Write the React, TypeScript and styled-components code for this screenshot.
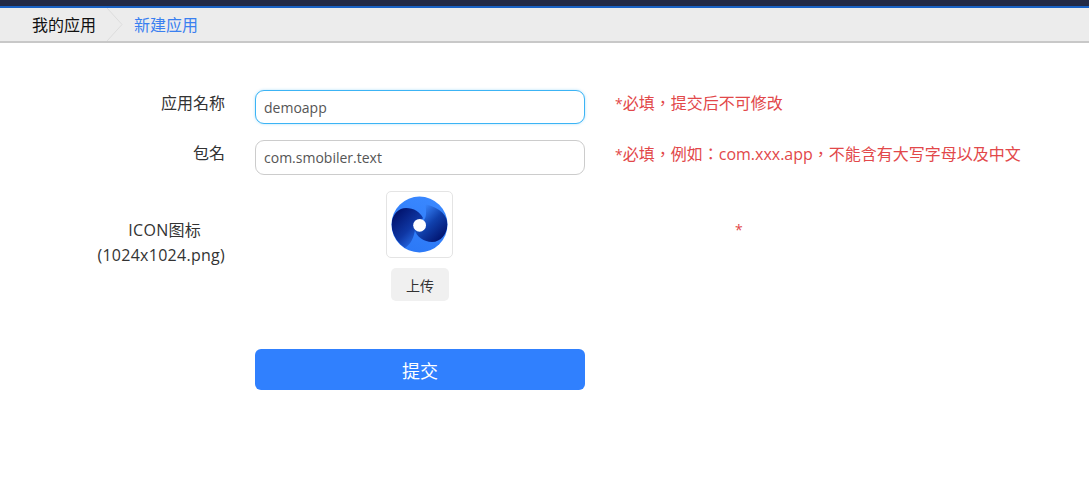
import React from "react";
import styled, { createGlobalStyle } from "styled-components";

const FONT = `"Open Sans", "Noto Sans CJK TC", sans-serif`;

const Global = createGlobalStyle`
  html, body { margin: 0; padding: 0; background: #fff; }
  body { font-family: ${FONT}; }
`;
const Page = styled.div`
  width: 1089px;
  height: 479px;
  overflow: hidden;
  background: #fff;
`;
const TopBar = styled.div`
  height: 6px;
  background: #232a45;
  border-bottom: 2px solid #1a62c4;
`;
const Crumbs = styled.nav`
  height: 33px;
  background: #ececec;
  border-bottom: 2px solid #c8c8c8;
  display: flex;
  align-items: center;
  font-size: 16px;
`;
const CrumbHome = styled.span`
  margin-left: 32px;
  margin-bottom: 2px;
  color: #111;
`;
const Chevron = styled.svg`
  width: 18px;
  height: 33px;
  margin-left: 11px;
  flex: none;
`;
const CrumbCurrent = styled.span`
  margin-left: 9px;
  margin-bottom: 2px;
  color: #3a80f0;
`;
const Form = styled.form`
  display: flex;
  flex-direction: column;
  padding-top: 47px;
`;
const Row = styled.div<{ $mb: number }>`
  display: flex;
  align-items: flex-start;
  margin-bottom: ${(p) => p.$mb}px;
`;
const Label = styled.label<{ $top?: number }>`
  width: 225px;
  flex: none;
  text-align: right;
  font-size: 16px;
  line-height: 26px;
  padding-top: ${(p) => p.$top ?? 0}px;
  color: #333;
`;
const LabelLine = styled.span<{ $shift?: number; $height?: number }>`
  display: block;
  margin-right: ${(p) => p.$shift ?? 0}px;
  line-height: ${(p) => p.$height ?? 26}px;
  letter-spacing: 0.27px;
`;
const Input = styled.input<{ $focus?: boolean }>`
  box-sizing: border-box;
  width: 330px;
  margin: 0 0 0 30px;
  padding: 0 8px;
  border-radius: 9px;
  outline: none;
  background: #fff;
  font-family: ${FONT};
  font-size: 14px;
  color: #555;
  height: ${(p) => (p.$focus ? 34 : 35)}px;
  border: 1px solid ${(p) => (p.$focus ? "#3cb4f5" : "#ccc")};
  box-shadow: ${(p) => (p.$focus ? "0 0 3px rgba(60,180,245,.4)" : "none")};
`;
const Hint = styled.span<{ $top?: number }>`
  margin-left: 30px;
  margin-top: ${(p) => p.$top ?? 0}px;
  font-size: 16px;
  line-height: 26px;
  color: #e2484a;
  white-space: nowrap;
`;
const Mark = styled.span`
  font-size: 14px;
`;
const IconColumn = styled.div`
  width: 330px;
  margin-left: 30px;
  display: flex;
  flex-direction: column;
  align-items: center;
  flex: none;
`;
const IconBox = styled.div`
  box-sizing: border-box;
  width: 67px;
  height: 67px;
  margin-right: 1px;
  border: 1px solid #e4e4e4;
  border-radius: 5px;
  display: flex;
  align-items: center;
  justify-content: center;
`;
const UploadButton = styled.button`
  margin-top: 10px;
  width: 58px;
  height: 33px;
  border: none;
  border-radius: 5px;
  background: #f0f0f0;
  color: #333;
  font-family: inherit;
  font-size: 14px;
  padding: 0;
`;
const Star = styled.span`
  margin-left: 150px;
  margin-top: 26px;
  font-size: 14px;
  line-height: 26px;
  color: #e2484a;
`;
const Submit = styled.button`
  margin-left: 255px;
  width: 330px;
  height: 41px;
  border: none;
  border-radius: 6px;
  background: #3080fe;
  color: #fff;
  font-family: inherit;
  font-size: 18px;
  padding: 0;
`;

const Logo = () => (
  <svg width="57" height="57" viewBox="0 0 57 57">
    <defs>
      <linearGradient id="base" x1="0.7" y1="0" x2="0.3" y2="1">
        <stop offset="0" stopColor="#3a88ff" />
        <stop offset="1" stopColor="#2b78f6" />
      </linearGradient>
      <linearGradient id="left" gradientUnits="userSpaceOnUse" x1="5" y1="18" x2="33" y2="46">
        <stop offset="0" stopColor="#021570" />
        <stop offset="0.5" stopColor="#0f37a4" />
        <stop offset="1" stopColor="#2e7cfa" />
      </linearGradient>
      <linearGradient id="right" gradientUnits="userSpaceOnUse" x1="53" y1="40" x2="28" y2="14">
        <stop offset="0" stopColor="#021570" />
        <stop offset="0.5" stopColor="#1040ac" />
        <stop offset="1" stopColor="#3a88ff" />
      </linearGradient>
      <clipPath id="disk">
        <circle cx="28.5" cy="28.5" r="28" />
      </clipPath>
    </defs>
    <circle cx="28.5" cy="28.5" r="28" fill="url(#base)" />
    <g clipPath="url(#disk)">
      <path d="M23 33 C26 41 33 46 41 46 C50 46 56 38 56.5 28.5 C56.5 20 50 12 34 8 C36 15 35 22 33 24 Z" fill="url(#right)" />
      <path d="M0.5 28.5 C1 18 8 12 15 12 C23 12 29 16 32 22 L24 34 C23 41 20 48 14 52 C5 46 0.5 36 0.5 28.5 Z" fill="url(#left)" />
    </g>
    <circle cx="28.6" cy="29.3" r="6.4" fill="#fff" />
  </svg>
);

export default function App() {
  return (
    <Page>
      <Global />
      <TopBar />
      <Crumbs>
        <CrumbHome>我的应用</CrumbHome>
        <Chevron viewBox="0 0 18 33">
          <path d="M0 0 L15 16.5 L0 33" fill="none" stroke="#dcdcdc" strokeWidth="1" />
        </Chevron>
        <CrumbCurrent>新建应用</CrumbCurrent>
      </Crumbs>
      <Form>
        <Row $mb={16}>
          <Label>应用名称</Label>
          <Input $focus defaultValue="demoapp" />
          <Hint><Mark>*</Mark>必填，提交后不可修改</Hint>
        </Row>
        <Row $mb={16}>
          <Label>包名</Label>
          <Input defaultValue="com.smobiler.text" />
          <Hint $top={1}><Mark>*</Mark>必填，例如：com.xxx.app，不能含有大写字母以及中文</Hint>
        </Row>
        <Row $mb={48}>
          <Label $top={26}>
            <LabelLine $shift={24}>ICON图标</LabelLine>
            <LabelLine $height={25}>(1024x1024.png)</LabelLine>
          </Label>
          <IconColumn>
            <IconBox>
              <Logo />
            </IconBox>
            <UploadButton type="button">上传</UploadButton>
          </IconColumn>
          <Star>*</Star>
        </Row>
        <Submit type="button">提交</Submit>
      </Form>
    </Page>
  );
}
